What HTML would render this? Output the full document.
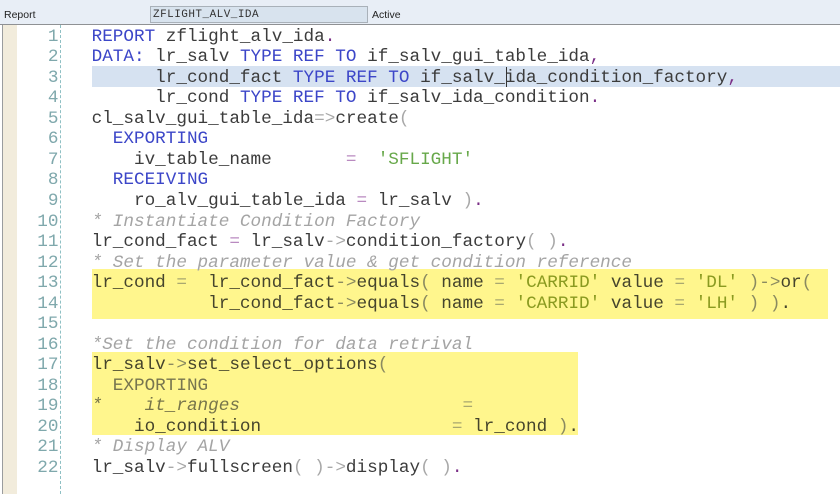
<!DOCTYPE html>
<html><head><meta charset="utf-8">
<style>
html,body{margin:0;padding:0;background:#fff}
#p{position:relative;width:840px;height:494px;overflow:hidden;background:#fff;font-family:"Liberation Mono",monospace}
.a{position:absolute}
.l{position:absolute;left:91.6px;margin-top:.9px;height:20px;line-height:20px;font-size:17.67px;white-space:pre;color:#3c3c3c}
.n{position:absolute;left:30px;margin-top:.9px;width:28.5px;text-align:right;height:20px;line-height:20px;font-size:17.67px;color:#7fa8ac;white-space:pre}
.k{color:#3c46c8}
.c{color:#a4a4a4;font-style:italic}
.s{color:#67a84a}
.o{color:#b98ac0}
.g{color:#a8a8a8}
.d{color:#7a2e86}
.y .k{color:#77754f}
.y .c{color:#77754a}
.y .s{color:#8a9a20}
.y .o{color:#a9a870}
.y .g{color:#8a8a60}
.y{color:#45442c}
.y .d{color:#45442c}
</style></head><body>
<div id="p">
<div class="a" style="left:0;top:0;width:840px;height:24px;background:#e8eef6"></div>
<div class="a" style="left:0;top:24px;width:840px;height:1px;background:#8f9194"></div>
<div class="a" style="left:4px;top:8px;font:10.5px/14px 'Liberation Sans',sans-serif;color:#222">Report</div>
<div class="a" style="left:150px;top:6px;width:216px;height:15px;background:#d8e3ee;border:1px solid #a9b1b9"></div>
<div class="a" style="left:153px;top:8px;font:11px/14px 'Liberation Mono',monospace;color:#333;letter-spacing:.47px">ZFLIGHT_ALV_IDA</div>
<div class="a" style="left:372px;top:8px;font:10.5px/14px 'Liberation Sans',sans-serif;color:#222">Active</div>
<div class="a" style="left:2px;top:25px;width:1px;height:469px;background:#9a9c9e"></div>
<div class="a" style="left:3px;top:25px;width:14px;height:469px;background:#f2ecdc"></div>
<div class="a" style="left:60px;top:25px;width:0;height:469px;border-left:1px dashed #8fc0c4"></div>
<div class="a" style="left:92px;top:66px;width:748px;height:21px;background:#d6e2f1"></div>
<div class="a" style="left:92px;top:269px;width:736px;height:50px;background:#fff68d"></div>
<div class="a" style="left:92px;top:352px;width:486px;height:83px;background:#fff68d"></div>
<div class="a" style="left:506px;top:67px;width:1px;height:20px;background:#333"></div>

<div class="n" style="top:26px">1</div>
<div class="n" style="top:46.5px">2</div>
<div class="n" style="top:67px">3</div>
<div class="n" style="top:87.5px">4</div>
<div class="n" style="top:108px">5</div>
<div class="n" style="top:128.6px">6</div>
<div class="n" style="top:149.1px">7</div>
<div class="n" style="top:169.6px">8</div>
<div class="n" style="top:190.1px">9</div>
<div class="n" style="top:210.7px">10</div>
<div class="n" style="top:231.2px">11</div>
<div class="n" style="top:251.7px">12</div>
<div class="n" style="top:272.2px">13</div>
<div class="n" style="top:292.8px">14</div>
<div class="n" style="top:313.3px">15</div>
<div class="n" style="top:333.8px">16</div>
<div class="n" style="top:354.3px">17</div>
<div class="n" style="top:374.9px">18</div>
<div class="n" style="top:395.4px">19</div>
<div class="n" style="top:415.9px">20</div>
<div class="n" style="top:436.4px">21</div>
<div class="n" style="top:457px">22</div>

<div class="l" style="top:26px"><span class="k">REPORT</span> zflight_alv_ida<span class="d">.</span></div>
<div class="l" style="top:46.5px"><span class="k">DATA:</span> lr_salv <span class="k">TYPE REF TO</span> if_salv_gui_table_ida<span class="d">,</span></div>
<div class="l" style="top:67px">      lr_cond_fact <span class="k">TYPE REF TO</span> if_salv_ida_condition_factory<span class="d">,</span></div>
<div class="l" style="top:87.5px">      lr_cond <span class="k">TYPE REF TO</span> if_salv_ida_condition<span class="d">.</span></div>
<div class="l" style="top:108px">cl_salv_gui_table_ida<span class="g">=&gt;</span>create<span class="g">(</span></div>
<div class="l" style="top:128.6px">  <span class="k">EXPORTING</span></div>
<div class="l" style="top:149.1px">    iv_table_name       <span class="o">=</span>  <span class="s">'SFLIGHT'</span></div>
<div class="l" style="top:169.6px">  <span class="k">RECEIVING</span></div>
<div class="l" style="top:190.1px">    ro_alv_gui_table_ida <span class="o">=</span> lr_salv <span class="g">)</span><span class="d">.</span></div>
<div class="l c" style="top:210.7px">* Instantiate Condition Factory</div>
<div class="l" style="top:231.2px">lr_cond_fact <span class="o">=</span> lr_salv<span class="g">-&gt;</span>condition_factory<span class="g">( )</span><span class="d">.</span></div>
<div class="l c" style="top:251.7px">* Set the parameter value &amp; get condition reference</div>
<div class="l y" style="top:272.2px">lr_cond <span class="o">=</span>  lr_cond_fact<span class="g">-&gt;</span>equals<span class="g">(</span> name <span class="o">=</span> <span class="s">'CARRID'</span> value <span class="o">=</span> <span class="s">'DL'</span> <span class="g">)-&gt;</span>or<span class="g">(</span></div>
<div class="l y" style="top:292.8px">           lr_cond_fact<span class="g">-&gt;</span>equals<span class="g">(</span> name <span class="o">=</span> <span class="s">'CARRID'</span> value <span class="o">=</span> <span class="s">'LH'</span> <span class="g">) )</span>.</div>
<div class="l c" style="top:333.8px">*Set the condition for data retrival</div>
<div class="l y" style="top:354.3px">lr_salv<span class="g">-&gt;</span>set_select_options<span class="g">(</span></div>
<div class="l y" style="top:374.9px">  <span class="k">EXPORTING</span></div>
<div class="l y" style="top:395.4px"><span class="c">*    it_ranges                     <span class="o">=</span></span></div>
<div class="l y" style="top:415.9px">    io_condition                  <span class="o">=</span> lr_cond <span class="g">)</span>.</div>
<div class="l c" style="top:436.4px">* Display ALV</div>
<div class="l" style="top:457px">lr_salv<span class="g">-&gt;</span>fullscreen<span class="g">( )-&gt;</span>display<span class="g">( )</span><span class="d">.</span></div>
</div>
</body></html>
